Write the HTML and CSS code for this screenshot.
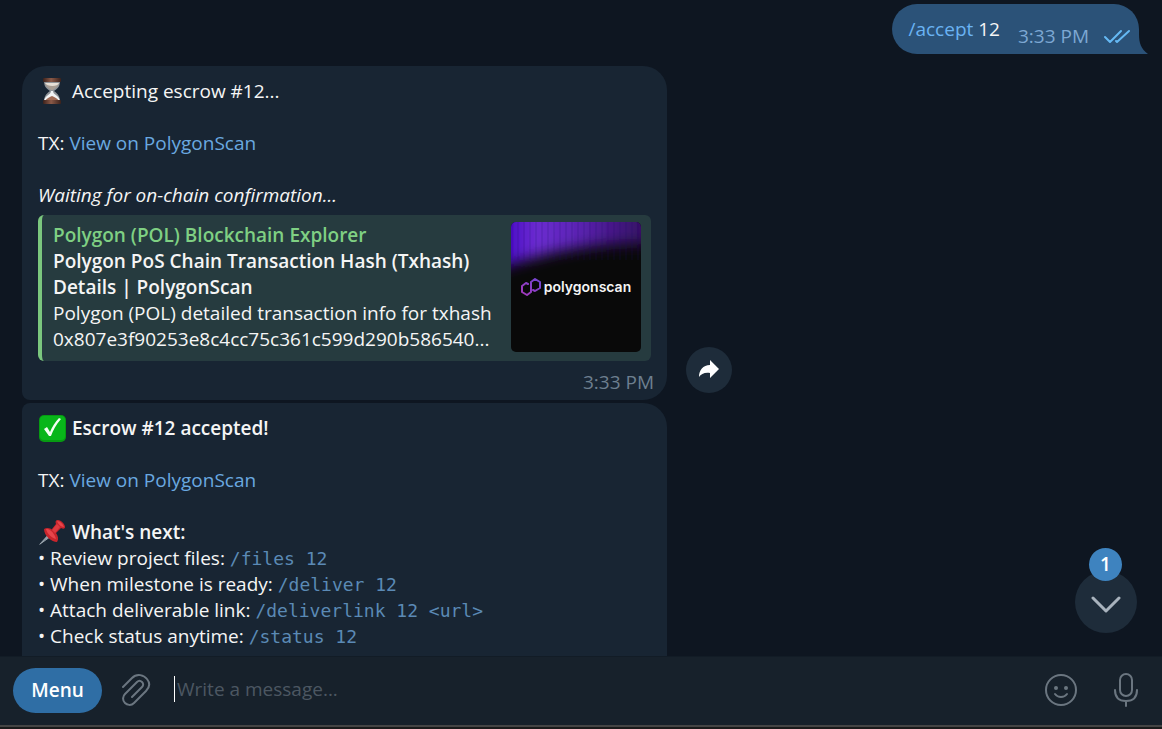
FILE: index.html
```html
<!DOCTYPE html>
<html lang="en">
<head>
    <meta charset="UTF-8">
    <meta name="viewport" content="width=device-width, initial-scale=1.0">
    <title>Escrow Bot</title>
    <link rel="stylesheet" href="styles.css">
</head>
<body>
    <main class="chat">
        <div class="row row-out">
            <div class="bubble-out">
                <span><a href="#">/accept</a> 12</span>
                <span class="time">3:33 PM</span>
                <svg class="checks" width="28" height="18" viewBox="0 0 28 18">
                    <path d="M2 9l5 5L18 3M13 13l1 1L26 3" />
                </svg>
                <svg class="tail" width="16" height="20" viewBox="0 0 16 20">
                    <path d="M0 0h7C7 9 9 15 16 20H0z" />
                </svg>
            </div>
        </div>

        <div class="row">
            <div class="bubble">
                <p>
                    <svg class="emoji" viewBox="0 0 28 28">
                        <defs>
                            <linearGradient id="wood" x1="0" x2="1">
                                <stop offset="0" stop-color="#3b211b" />
                                <stop offset="0.45" stop-color="#8b5a48" />
                                <stop offset="1" stop-color="#3b211b" />
                            </linearGradient>
                        </defs>
                        <path d="M6 3c0 7 2 8 6 11-4 3-6 5-6 11h16c0-6-2-8-6-11 4-3 6-4 6-11z" fill="#8f9499" />
                        <path d="M7 6h14c-1 4-4 5-6 7h-2c-2-2-5-3-6-7z" fill="#a89d93" />
                        <path d="M7 6h14c-1 4-12 4-14 0z" fill="#e6dfd6" />
                        <path d="M13 14h2c0 4 6 4 7 10H6c1-6 7-6 7-10z" fill="#f1f3f5" />
                        <path d="M7 24c2-3 5-4 7-5 2 1 5 2 7 5z" fill="#a06b55" />
                        <rect x="5" y="1" width="18" height="4" rx="1" fill="url(#wood)" />
                        <rect x="5" y="23" width="18" height="4" rx="1" fill="url(#wood)" />
                    </svg>
                    Accepting escrow #12...
                </p>
                <p>TX: <a href="#">View on PolygonScan</a></p>
                <p><em>Waiting for on-chain confirmation...</em></p>

                <div class="preview">
                    <div class="preview-text">
                        <div class="preview-site">Polygon (POL) Blockchain Explorer</div>
                        <div class="preview-title">Polygon PoS Chain Transaction Hash (Txhash) Details | PolygonScan</div>
                        <div>Polygon (POL) detailed transaction info for txhash 0x807e3f90253e8c4cc75c361c599d290b586540...</div>
                    </div>
                    <div class="thumb">
                        <svg class="glow" viewBox="0 0 130 130">
                            <defs>
                                <linearGradient id="violet" x1="0" x2="1">
                                    <stop offset="0" stop-color="#4a08c4" />
                                    <stop offset="0.12" stop-color="#4a08c4" />
                                    <stop offset="0.25" stop-color="#6c2dd2" />
                                    <stop offset="0.5" stop-color="#5c24b4" />
                                    <stop offset="0.75" stop-color="#421580" />
                                    <stop offset="1" stop-color="#2c0d50" />
                                </linearGradient>
                                <pattern id="stripes" width="6" height="60" patternUnits="userSpaceOnUse">
                                    <rect width="2" height="60" fill="#1a0560" opacity="0.12" />
                                </pattern>
                                <filter id="soft" x="-20%" y="-40%" width="140%" height="180%">
                                    <feGaussianBlur stdDeviation="7" />
                                </filter>
                            </defs>
                            <path d="M-20-30h170v52C90 20 40 26-20 50z" fill="url(#violet)" filter="url(#soft)" />
                            <rect width="130" height="38" fill="url(#stripes)" />
                        </svg>
                        <div class="brand">
                            <svg width="20" height="18" viewBox="0 0 20 18">
                                <defs>
                                    <linearGradient id="link" x1="0" y1="1" x2="1" y2="0">
                                        <stop offset="0" stop-color="#a337b8" />
                                        <stop offset="1" stop-color="#7246d2" />
                                    </linearGradient>
                                </defs>
                                <path d="M7 6L5 5L1 8v6l5 3 4-3V4l4-3 5 3v6l-5 3-2-1" />
                            </svg>
                            polygonscan
                        </div>
                    </div>
                </div>
                <div class="time">3:33 PM</div>
            </div>
            <button class="share" aria-label="Forward">
                <svg width="24" height="22" viewBox="0 0 24 22">
                    <path d="M13 1l9 9-9 9v-5C8 13 4 15 2 18 2 11 6 6 13 6z" />
                </svg>
            </button>
        </div>

        <div class="row">
            <div class="bubble">
                <p>
                    <svg class="emoji" viewBox="0 0 28 28">
                        <rect x="1" y="1" width="27" height="27" rx="5" fill="#079b12" />
                        <rect x="2" y="2" width="25" height="24" rx="4" fill="#08b61a" />
                        <path d="M6 15l3-2 3 5C14 13 17 8 21 4l2 1c-5 6-8 11-10 17h-2z" fill="#f4fff4" />
                    </svg>
                    <strong>Escrow #12 accepted!</strong>
                </p>
                <p>TX: <a href="#">View on PolygonScan</a></p>
                <p>
                    <svg class="emoji" viewBox="0 0 28 28">
                        <path d="M2 26l10-11 2 2z" fill="#9aa5ae" stroke="#9aa5ae" />
                        <path d="M6 11c3-2 6-1 9 1l-1-1 4-5c-1-3 0-4 2-4 3 0 7 4 7 7 0 2-2 2-4 1l-5 5c2 3 3 6 1 9-5 0-13-6-13-13z" fill="#c9252c" />
                        <path d="M8 11c4-1 9 5 10 10-4-1-9-5-10-10zM19 3c3 0 6 3 7 6-3 0-6-3-7-6z" fill="#e8454b" />
                        <path d="M14 12l5-6 3 3-5 6z" fill="#dd3a40" />
                    </svg>
                    <strong>What's next:</strong><br>
                    • Review project files: <code>/files 12</code><br>
                    • When milestone is ready: <code>/deliver 12</code><br>
                    • Attach deliverable link: <code>/deliverlink 12 &lt;url&gt;</code><br>
                    • Check status anytime: <code>/status 12</code>
                </p>
            </div>
        </div>

        <button class="scroll-down" aria-label="Scroll to bottom">
            <span class="badge">1</span>
            <svg width="30" height="18" viewBox="0 0 30 18">
                <path d="M2 2l13 13L28 2" />
            </svg>
        </button>
    </main>

    <footer class="composer">
        <button class="menu">Menu</button>
        <button class="icon" aria-label="Attach file">
            <svg width="32" height="34" viewBox="0 0 32 34">
                <path d="M3 14L12 5C17 0 24 2 27 6c4 5 2 9-1 12L14 30c-3 3-7 2-9 0-3-3-2-7 0-9L17 9c2-2 4-1 5 0 2 2 1 4 0 5L12 24" />
            </svg>
        </button>
        <input type="text" placeholder="Write a message..." aria-label="Write a message">
        <button class="icon" aria-label="Emoji">
            <svg width="34" height="34" viewBox="0 0 34 34">
                <circle cx="17" cy="17" r="15" />
                <circle class="dot" cx="12" cy="15" r="2" />
                <circle class="dot" cx="22" cy="15" r="2" />
                <path d="M11 21c3 4 9 4 12 0" />
            </svg>
        </button>
        <button class="icon" aria-label="Voice message">
            <svg width="26" height="34" viewBox="0 0 26 34">
                <rect x="7" y="1" width="12" height="22" rx="6" />
                <path d="M2 17c0 7 4 11 11 11s11-4 11-11M13 28v5" />
            </svg>
        </button>
    </footer>
</body>
</html>
```
FILE: styles.css
```css
* {
    box-sizing: border-box;
}
body {
    margin: 0;
    height: 100vh;
    display: flex;
    flex-direction: column;
    background-color: #0e1621;
    color: #f5f5f5;
    font-family: "Open Sans", sans-serif;
    font-size: 19px;
    line-height: 26px;
}
a {
    color: #6ab3f3;
    text-decoration: none;
}
button {
    padding: 0;
    border: none;
    background: none;
    color: inherit;
    font: inherit;
    cursor: pointer;
}
svg {
    fill: none;
    stroke-linecap: round;
    stroke-linejoin: round;
}
strong {
    font-weight: 600;
}
code {
    color: #5b8ab5;
    font-family: "DejaVu Sans Mono", monospace;
    font-size: 18px;
    line-height: 1;
}

/* messages */
.chat {
    position: relative;
    flex: 1;
    min-height: 0;
    overflow: hidden;
    padding: 4px 23px 0 22px;
}
.row {
    display: flex;
    align-items: flex-end;
    gap: 19px;
    margin-bottom: 3px;
}
.row-out {
    justify-content: flex-end;
    margin-bottom: 12px;
}
.bubble {
    width: 645px;
    max-width: 90%;
    padding: 12px 16px 5px;
    background-color: #182533;
    border-radius: 24px 24px 24px 8px;
}
.row:nth-child(3) .bubble {
    border-top-left-radius: 8px;
}
.bubble p {
    margin: 0 0 26px;
}
.bubble p:has(em) {
    margin-bottom: 7px;
}
.bubble a {
    color: #6aa9e0;
}
.emoji {
    width: 28px;
    height: 28px;
    margin: -7px 1px -3px 0;
    vertical-align: middle;
}
.time {
    color: #6d7f8f;
}
.bubble .time {
    margin: 8px -3px 0 0;
    text-align: right;
}
.bubble-out {
    position: relative;
    display: flex;
    align-items: center;
    height: 50px;
    padding: 0 8px 0 16px;
    background-color: #2b5278;
    border-radius: 25px 25px 0 25px;
}
.bubble-out .time {
    margin: 13px 14px 0 18px;
    color: #7da8d3;
}
.checks {
    margin-top: 15px;
    stroke: #65b9f4;
    stroke-width: 2;
}
.tail {
    position: absolute;
    right: -9px;
    bottom: 0;
    fill: #2b5278;
}

/* link preview */
.preview {
    display: flex;
    justify-content: space-between;
    padding: 7px 10px 9px 11px;
    background-color: #263b3f;
    border-left: 4px solid #7bc77e;
    border-radius: 6px;
}
.preview-text {
    flex: 1;
    min-width: 0;
    overflow-wrap: anywhere;
}
.preview-site {
    color: #7fd083;
    font-weight: 600;
}
.preview-title {
    font-weight: 600;
}
.thumb {
    display: grid;
    width: 130px;
    height: 130px;
    margin-left: 8px;
    background-color: #090909;
    border-radius: 5px;
    overflow: hidden;
}
.glow, .brand {
    grid-area: 1 / 1;
}
.brand {
    display: flex;
    align-items: center;
    justify-content: center;
    gap: 3px;
    z-index: 1;
    font-family: Inter, sans-serif;
    font-size: 14px;
    font-weight: 600;
}
.brand svg {
    stroke: url(#link);
    stroke-width: 2;
}

/* round buttons */
.share {
    display: grid;
    place-items: center;
    width: 46px;
    height: 46px;
    margin-bottom: 7px;
    background-color: #1e2c3a;
    border-radius: 50%;
}
.share svg {
    fill: #fff;
}
.scroll-down {
    position: absolute;
    right: 25px;
    bottom: 23px;
    display: grid;
    place-items: center;
    width: 62px;
    height: 62px;
    padding-top: 5px;
    background-color: #1e2c3a;
    border-radius: 50%;
}
.scroll-down svg {
    stroke: #a9b3bd;
    stroke-width: 3;
}
.badge {
    position: absolute;
    top: -23px;
    left: 14px;
    width: 33px;
    height: 33px;
    background-color: #3e83bf;
    border-radius: 50%;
    color: #fff;
    font-weight: 600;
    line-height: 32px;
}

/* message input */
.composer {
    display: flex;
    align-items: center;
    height: 73px;
    padding: 0 23px 4px 13px;
    background-color: #17212b;
    border-top: 1px solid #121c26;
    border-bottom: 2px solid #1b1b1b;
    box-shadow: inset 0 -2px #454545;
}
.composer .menu {
    width: 89px;
    height: 45px;
    background-color: #2f6ea5;
    border-radius: 23px;
    color: #fff;
    font-weight: 600;
}
.composer .icon {
    display: grid;
}
.composer .icon svg {
    stroke: #6b7680;
    stroke-width: 2;
}
.composer .icon .dot {
    fill: #6b7680;
    stroke: none;
}
.composer .menu + .icon {
    margin: 0 22px 0 18px;
}
.composer .icon:last-child {
    margin-left: 35px;
}
.composer input {
    flex: 1;
    min-width: 0;
    height: 26px;
    margin-bottom: 3px;
    padding: 0 0 0 2px;
    border: none;
    border-left: 1px solid #fff;
    outline: none;
    background: none;
    color: #f5f5f5;
    font: inherit;
}
.composer input::placeholder {
    color: #4c5762;
    opacity: 1;
}
```
